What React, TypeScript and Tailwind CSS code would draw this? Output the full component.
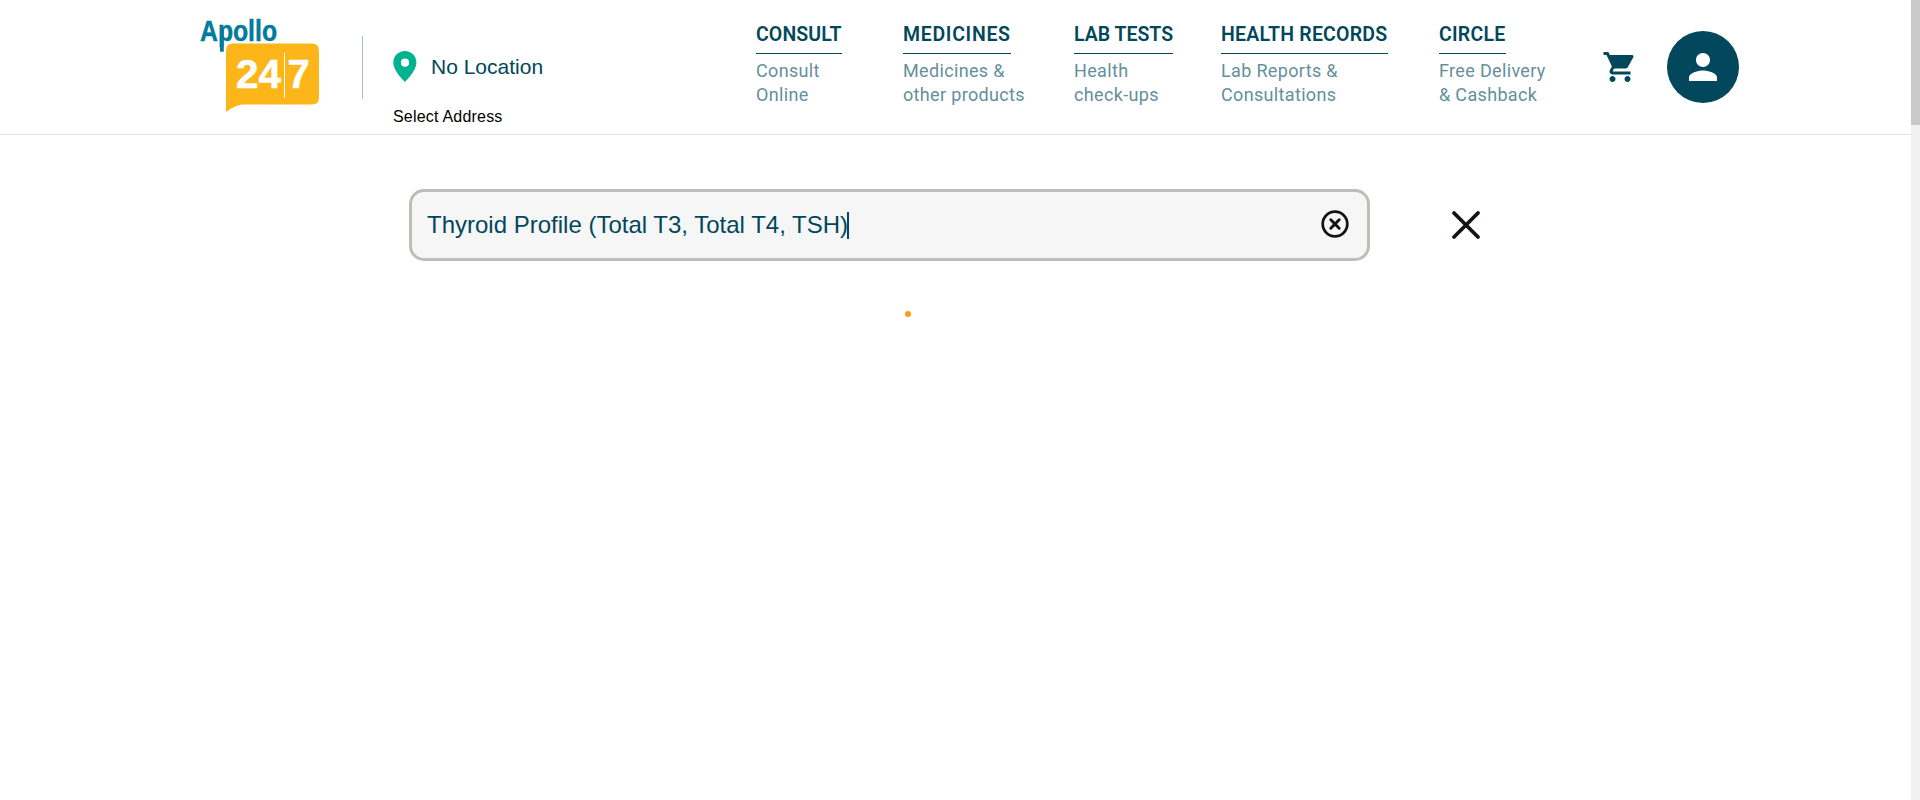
const navItems = [
  { title: "CONSULT", lines: ["Consult", "Online"], box: "ml-[210px] w-[147px]", titleBox: "w-[86px] tracking-[0.1px]" },
  { title: "MEDICINES", lines: ["Medicines &", "other products"], box: "w-[171px]", titleBox: "w-[108px] tracking-[0.7px]" },
  { title: "LAB TESTS", lines: ["Health", "check-ups"], box: "w-[147px]", titleBox: "w-[99px] tracking-[0px]" },
  { title: "HEALTH RECORDS", lines: ["Lab Reports &", "Consultations"], box: "w-[218px]", titleBox: "w-[167px] tracking-[0.22px]" },
  { title: "CIRCLE", lines: ["Free Delivery", "& Cashback"], box: "w-[164px]", titleBox: "w-[67px] tracking-[0.25px]" },
];

function Logo() {
  return (
    <svg width="122" height="104" viewBox="-2 -8 122 104" className="mt-[9px] shrink-0 overflow-visible font-['Liberation_Sans',sans-serif] font-bold">
      <text x="0" y="23.500" fontSize="30" fill="#007c9d" stroke="#007c9d" strokeWidth="0.500" textLength="77" lengthAdjust="spacingAndGlyphs">Apollo</text>
      <rect x="20" y="12" width="3.800" height="22.700" fill="#007c9d" />
      <path d="M26 33.500 Q26 26.500 33 26.500 H112 Q119 26.500 119 33.500 V80.500 Q119 87.500 112 87.500 H43 Q36 87.500 26 95 Z" fill="#fcb61a" />
      <text x="36" y="71" fontSize="40" fill="#fff" stroke="#fff" strokeWidth="0.500" textLength="45" lengthAdjust="spacingAndGlyphs">24</text>
      <text x="87.500" y="71" fontSize="40" fill="#fff" stroke="#fff" strokeWidth="0.500">7</text>
      <rect x="84" y="36" width="1" height="45" fill="#fff" />
    </svg>
  );
}

export default function App() {
  return (
    <div className="flex h-[800px] w-[1920px] overflow-hidden bg-white font-['Liberation_Sans',Arial,sans-serif]">
      <div className="flex grow flex-col">
        <header className="flex h-[135px] border-b border-[#e4e4e4] pl-[198px]">
          <Logo />
          <div className="mt-9 ml-[42px] h-[63px] w-px shrink-0 bg-[#a9bfc6]" />
          <div className="mt-[51px] ml-[30px] w-[153px] shrink-0">
            <div className="flex h-[32px] items-center">
              <svg width="24" height="32" viewBox="0 0 24 32" className="mr-[14px] shrink-0">
                <path d="M12 0C5.400 0 .3 5.100.3 11.600.3 20.300 12 31 12 31s11.400-10.700 11.400-19.400C23.400 5.100 18.300 0 12 0Zm0 15.800a4.100 4.100 0 1 1 0-8.200 4.100 4.100 0 0 1 0 8.200Z" fill="#00b38e" />
              </svg>
              <span className="text-[21px] whitespace-nowrap text-[#02475b]">No Location</span>
            </div>
            <div className="mt-[22px] text-[16px] leading-6 tracking-[0.200px] whitespace-nowrap text-black">Select Address</div>
          </div>
          <nav className="mt-[21px] flex shrink-0 font-['Roboto',sans-serif]">
            {navItems.map((item) => (
              <a key={item.title} className={item.box}>
                <div className={`h-[33px] border-b border-[#02475b] pt-px text-[19.500px] leading-[26px] font-semibold whitespace-nowrap text-[#02475b] ${item.titleBox}`}>{item.title}</div>
                <div className="mt-[5px] text-[18px] leading-6 tracking-[0.340px] text-[#658f9b]">
                  {item.lines.map((line) => <div key={line} className="whitespace-nowrap">{line}</div>)}
                </div>
              </a>
            ))}
          </nav>
          <svg width="36" height="36" viewBox="0 0 24 24" fill="#02475b" className="mt-[49px] -ml-[1px] shrink-0">
            <path d="M7 18c-1.100 0-1.990.9-1.990 2S5.900 22 7 22s2-.9 2-2-.9-2-2-2zM1 2v2h2l3.600 7.590-1.350 2.450c-.16.28-.25.61-.25.960 0 1.100.9 2 2 2h12v-2H7.420c-.14 0-.25-.11-.25-.25l.03-.12.900-1.630h7.450c.75 0 1.410-.41 1.750-1.030l3.580-6.490c.08-.14.120-.31.120-.48 0-.55-.45-1-1-1H5.210l-.94-2H1zm16 16c-1.100 0-1.990.9-1.990 2s.89 2 1.990 2 2-.9 2-2-.9-2-2-2z" />
          </svg>
          <div className="mt-[31px] ml-[29px] flex size-18 shrink-0 items-center justify-center rounded-full bg-[#02475b]">
            <svg width="42" height="42" viewBox="0 0 24 24" fill="#fff">
              <path d="M12 12c2.210 0 4-1.790 4-4s-1.790-4-4-4-4 1.790-4 4 1.790 4 4 4zm0 2c-2.670 0-8 1.340-8 4v2h16v-2c0-2.660-5.330-4-8-4z" />
            </svg>
          </div>
        </header>
        <main className="flex flex-col pt-[54px] pl-[409px]">
          <div className="flex items-center">
            <div className="flex h-[72px] w-[961px] items-center rounded-[15px] border-[3px] border-[#bdbdb9] bg-[#f6f6f6] pl-[15px] pr-[18px]">
              <span className="text-[24px] leading-7 whitespace-nowrap text-[#02475b]">Thyroid Profile (Total T3, Total T4, TSH)</span>
              <span className="-ml-px h-[27px] w-[2px] bg-[#02475b]" />
              <svg width="28" height="28" viewBox="0 0 28 28" fill="none" stroke="#101414" className="mb-[2px] ml-auto">
                <circle cx="14" cy="14" r="12.300" strokeWidth="2.700" />
                <path d="M9.800 9.800l8.400 8.400M18.200 9.800l-8.400 8.400" strokeWidth="2.900" strokeLinecap="round" />
              </svg>
            </div>
            <svg width="30" height="30" viewBox="0 0 30 30" fill="none" stroke="#101414" className="ml-[81px]">
              <path d="M3 3l24 24M27 3L3 27" strokeWidth="3.800" strokeLinecap="round" />
            </svg>
          </div>
          <div className="mt-[50px] ml-[496px] size-[6px] rounded-full bg-[#fc9916]" />
        </main>
      </div>
      <div className="w-[9px] shrink-0 bg-[#f1f1f1]">
        <div className="h-[125px] bg-[#c9c9c9]" />
      </div>
    </div>
  );
}
